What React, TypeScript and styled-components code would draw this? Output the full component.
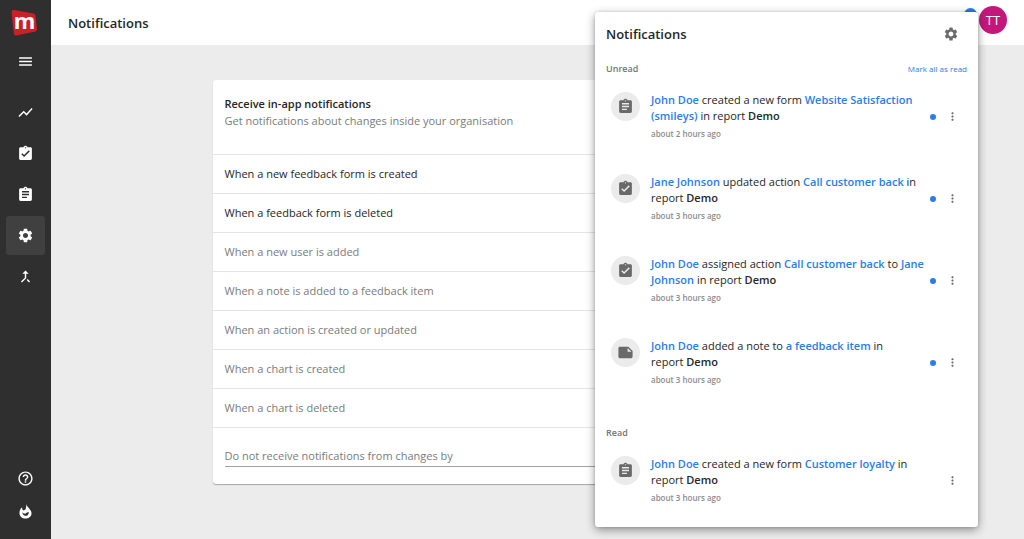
import React from "react";
import styled, { createGlobalStyle } from "styled-components";
import type { IconType } from "react-icons";
import {
  MdAssignment,
  MdAssignmentTurnedIn,
  MdCallMerge,
  MdHelpOutline,
  MdMenu,
  MdMoreVert,
  MdNote,
  MdSettings,
  MdShowChart,
} from "react-icons/md";

const GlobalStyle = createGlobalStyle`
  *, *::before, *::after { box-sizing: border-box; }
  body {
    margin: 0;
    background: #ececec;
    color: #262626;
    font-family: "Open Sans", "Noto Sans", sans-serif;
    font-size: 11px;
    line-height: 16px;
  }
  h1, h2, h3, p, ul { margin: 0; padding: 0; }
  ul { list-style: none; }
  a { color: inherit; text-decoration: none; }
  button { border: 0; padding: 0; background: none; font: inherit; color: inherit; cursor: pointer; }
`;

const Shell = styled.div`
  position: relative;
  display: flex;
  min-height: 100vh;
`;

const Sidebar = styled.nav`
  display: flex;
  flex-direction: column;
  align-items: center;
  flex: 0 0 51px;
  padding: 7px 0 11px;
  background: #2f2f2f;
  color: #fff;
`;

const LogoLink = styled.a`
  display: block;
  height: 32px;
  margin-right: 3px;
`;

const NavGroup = styled.div<{ $top?: number; $gap: number }>`
  display: flex;
  flex-direction: column;
  gap: ${(p) => p.$gap}px;
  margin-top: ${(p) => (p.$top === undefined ? "auto" : `${p.$top}px`)};
`;

const NavButton = styled.button<{ $active?: boolean; $height?: number }>`
  display: flex;
  align-items: center;
  justify-content: center;
  width: 39px;
  height: ${(p) => p.$height ?? 39}px;
  border-radius: 3px;
  background: ${(p) => (p.$active ? "#404040" : "transparent")};
`;

const Page = styled.div`
  display: flex;
  flex-direction: column;
  flex: 1;
  min-width: 0;
`;

const TopBar = styled.header`
  display: flex;
  align-items: center;
  justify-content: space-between;
  height: 45px;
  padding: 0 17px;
  background: #fff;
`;

const Title = styled.h1`
  font-size: 13px;
  font-weight: 600;
  line-height: 18px;
`;

const Account = styled.div`
  display: flex;
  gap: 2px;
  height: 33px;
`;

const Badge = styled.span`
  width: 13px;
  height: 13px;
  margin-top: 2px;
  border-radius: 50%;
  background: #2b7de9;
`;

const Avatar = styled.button`
  width: 28px;
  height: 28px;
  border-radius: 50%;
  background: #c4177c;
  color: #fff;
  font-size: 13px;
`;

const Content = styled.main`
  padding: 35px 24px 54px;
`;

const Card = styled.section`
  max-width: 650px;
  margin: 0 auto;
  border-radius: 3px;
  background: #fff;
  box-shadow: 0 1px 1px rgba(0, 0, 0, 0.3);
`;

const CardHead = styled.div`
  height: 74px;
  padding: 15px 12px 0;
  color: #7b7b7b;
  line-height: 17px;
`;

const CardTitle = styled.h2`
  color: #262626;
  font-size: 11px;
  font-weight: 600;
  line-height: 17px;
`;

const Setting = styled.li<{ $enabled: boolean }>`
  height: 39px;
  padding: 11px 12px;
  border-top: 1px solid #e4e4e4;
  color: ${(p) => (p.$enabled ? "#262626" : "#7b7b7b")};
`;

const CardFoot = styled.div`
  padding: 17px 12px;
  border-top: 1px solid #e4e4e4;
`;

const Exclusions = styled.input`
  display: block;
  width: 100%;
  height: 22px;
  padding: 0;
  border: 0;
  border-bottom: 1px solid #a3a3a3;
  background: none;
  font: inherit;
  outline: none;
  &::placeholder { color: #7b7b7b; opacity: 1; }
`;

const Panel = styled.aside`
  position: absolute;
  top: 12px;
  right: 46px;
  width: 383px;
  max-width: calc(100% - 97px);
  padding-bottom: 5px;
  border-radius: 3px;
  background: #fff;
  box-shadow: 0 3px 10px rgba(0, 0, 0, 0.4), 0 0 3px rgba(0, 0, 0, 0.15);
`;

const PanelHead = styled.div`
  display: flex;
  align-items: center;
  justify-content: space-between;
  height: 44px;
  padding: 0 19px 0 11px;
`;

const IconButton = styled.button`
  display: flex;
  color: #6b6b6b;
`;

const SectionHead = styled.div<{ $top?: number }>`
  display: flex;
  align-items: center;
  justify-content: space-between;
  height: 20px;
  padding: 6px 11px 0;
  margin-top: ${(p) => p.$top ?? 0}px;
  line-height: 14px;
`;

const SectionTitle = styled.h3`
  color: #757575;
  font-size: 9px;
  font-weight: 600;
`;

const MarkAll = styled.button`
  color: #2b7de9;
  font-size: 8px;
`;

const Item = styled.li`
  display: grid;
  grid-template-columns: 29px minmax(0, 1fr) 6px 24px;
  align-items: start;
  height: 82px;
  padding: 16px 18px 0 16px;
`;

const ItemIcon = styled.span`
  display: flex;
  align-items: center;
  justify-content: center;
  width: 29px;
  height: 29px;
  border-radius: 50%;
  background: #ebebeb;
  color: #696969;
`;

const ItemText = styled.div`
  padding: 0 4px 0 11px;
`;

const Mention = styled.a`
  color: #2b7de9;
  font-weight: 600;
`;

const Report = styled.span`
  white-space: nowrap;

  b {
    font-weight: 600;
  }
`;

const Time = styled.p`
  margin-top: 4px;
  color: #8c8c8c;
  font-size: 8px;
  font-weight: 600;
  line-height: 12px;
`;

const UnreadDot = styled.span<{ $visible: boolean }>`
  width: 6px;
  height: 6px;
  margin-top: 22px;
  border-radius: 50%;
  background: ${(p) => (p.$visible ? "#2b7de9" : "transparent")};
`;

const MoreButton = styled(IconButton)`
  justify-content: center;
  width: 15px;
  margin-top: 18px;
  justify-self: end;
`;

const navItems: { label: string; icon: IconType; active?: boolean }[] = [
  { label: "Reports", icon: MdShowChart },
  { label: "Actions", icon: MdAssignmentTurnedIn },
  { label: "Forms", icon: MdAssignment },
  { label: "Settings", icon: MdSettings, active: true },
  { label: "Integrations", icon: MdCallMerge },
];

const settings = [
  { label: "When a new feedback form is created", enabled: true },
  { label: "When a feedback form is deleted", enabled: true },
  { label: "When a new user is added", enabled: false },
  { label: "When a note is added to a feedback item", enabled: false },
  { label: "When an action is created or updated", enabled: false },
  { label: "When a chart is created", enabled: false },
  { label: "When a chart is deleted", enabled: false },
];

interface Notice {
  icon: IconType;
  who: string;
  verb: string;
  what: string;
  assignee?: string;
  time: string;
}

const unread: Notice[] = [
  { icon: MdAssignment, who: "John Doe", verb: "created a new form", what: "Website Satisfaction (smileys)", time: "about 2 hours ago" },
  { icon: MdAssignmentTurnedIn, who: "Jane Johnson", verb: "updated action", what: "Call customer back", time: "about 3 hours ago" },
  { icon: MdAssignmentTurnedIn, who: "John Doe", verb: "assigned action", what: "Call customer back", assignee: "Jane Johnson", time: "about 3 hours ago" },
  { icon: MdNote, who: "John Doe", verb: "added a note to", what: "a feedback item", time: "about 3 hours ago" },
];

const read: Notice[] = [
  { icon: MdAssignment, who: "John Doe", verb: "created a new form", what: "Customer loyalty", time: "about 3 hours ago" },
];

function Logo() {
  return (
    <svg width="28" height="32" viewBox="0 -2 28 32" overflow="visible" aria-hidden="true">
      <path
        d="M4.2 1.1 L23.5 4.6 Q25.2 4.9 25.4 6.6 L27 20.2 Q27.2 22 25.4 22.5 L6.2 26.5 Q4.2 26.8 3.9 24.8 L1.6 3.4 Q1.5 0.7 4.2 1.1 Z"
        fill="#cb2026"
      />
      <text x="14.5" y="20" textAnchor="middle" fill="#fff" fontFamily="Open Sans, sans-serif" fontSize="22" fontWeight="700">
        m
      </text>
    </svg>
  );
}

function FlameIcon() {
  return (
    <svg width="17" height="17" viewBox="0 0 24 24" fill="currentColor" fillRule="evenodd" aria-hidden="true">
      <path d="M13 1.5C14 6.5 20.5 9 20.5 14.5C20.5 19 16.8 22 12 22C7 22 3.5 18.6 3.5 14C3.5 10.6 5 7.8 7.2 6C7 8.8 8 10.6 9.8 10.4C12.2 10 13.4 6.5 13 1.5ZM7.8 12.6C7.4 16 9.3 18 12 18C14.8 18 16.8 16 16.6 12.4C15.8 13.4 14.6 13.2 13.6 13.6C12.6 14 12.6 15 11.2 15C9.6 15 8.4 14.2 7.8 12.6Z" />
    </svg>
  );
}

function NoticeItem({ notice, isUnread }: { notice: Notice; isUnread: boolean }) {
  const Icon = notice.icon;
  return (
    <Item>
      <ItemIcon>
        <Icon size={17} />
      </ItemIcon>
      <ItemText>
        <p>
          <Mention href="#user">{notice.who}</Mention> {notice.verb} <Mention href="#item">{notice.what}</Mention>
          {notice.assignee && (
            <>
              {" "}to <Mention href="#assignee">{notice.assignee}</Mention>
            </>
          )}{" "}
          in <Report>report <b>Demo</b></Report>
        </p>
        <Time>{notice.time}</Time>
      </ItemText>
      <UnreadDot $visible={isUnread} />
      <MoreButton aria-label="More options">
        <MdMoreVert size={13} />
      </MoreButton>
    </Item>
  );
}

export default function App() {
  return (
    <>
      <GlobalStyle />
      <Shell>
        <Sidebar aria-label="Main">
          <LogoLink href="#home" aria-label="Home">
            <Logo />
          </LogoLink>
          <NavGroup $top={3} $gap={2}>
            <NavButton aria-label="Menu">
              <MdMenu size={17} />
            </NavButton>
          </NavGroup>
          <NavGroup $top={12} $gap={2}>
            {navItems.map(({ label, icon: Icon, active }) => (
              <NavButton key={label} aria-label={label} $active={active}>
                <Icon size={17} />
              </NavButton>
            ))}
          </NavGroup>
          <NavGroup $gap={0}>
            <NavButton aria-label="Help" $height={33}>
              <MdHelpOutline size={17} />
            </NavButton>
            <NavButton aria-label="What's new" $height={33}>
              <FlameIcon />
            </NavButton>
          </NavGroup>
        </Sidebar>

        <Page>
          <TopBar>
            <Title>Notifications</Title>
            <Account>
              <Badge />
              <Avatar aria-label="Account">TT</Avatar>
            </Account>
          </TopBar>
          <Content>
            <Card>
              <CardHead>
                <CardTitle>Receive in-app notifications</CardTitle>
                <p>Get notifications about changes inside your organisation</p>
              </CardHead>
              <ul>
                {settings.map((s) => (
                  <Setting key={s.label} $enabled={s.enabled}>
                    {s.label}
                  </Setting>
                ))}
              </ul>
              <CardFoot>
                <Exclusions
                  aria-label="Do not receive notifications from changes by"
                  placeholder="Do not receive notifications from changes by"
                />
              </CardFoot>
            </Card>
          </Content>
        </Page>

        <Panel>
          <PanelHead>
            <Title as="h2">Notifications</Title>
            <IconButton aria-label="Notification settings">
              <MdSettings size={16} />
            </IconButton>
          </PanelHead>
          <SectionHead>
            <SectionTitle>Unread</SectionTitle>
            <MarkAll>Mark all as read</MarkAll>
          </SectionHead>
          <ul>
            {unread.map((n, i) => (
              <NoticeItem key={i} notice={n} isUnread />
            ))}
          </ul>
          <SectionHead $top={16}>
            <SectionTitle>Read</SectionTitle>
          </SectionHead>
          <ul>
            {read.map((n, i) => (
              <NoticeItem key={i} notice={n} isUnread={false} />
            ))}
          </ul>
        </Panel>
      </Shell>
    </>
  );
}
